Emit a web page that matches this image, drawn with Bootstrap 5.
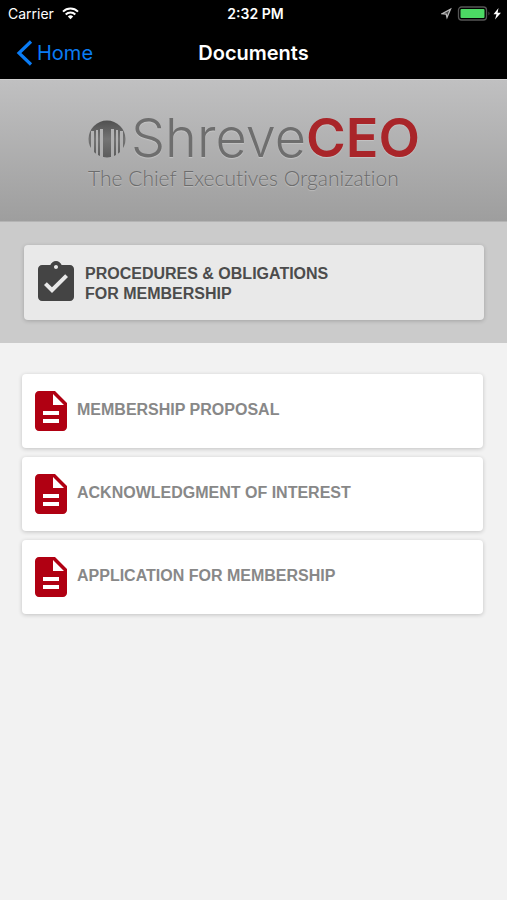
<!DOCTYPE html>
<html lang="en">
<head>
<meta charset="utf-8">
<meta name="viewport" content="width=device-width, initial-scale=1">
<title>Documents</title>
<link href="https://cdn.jsdelivr.net/npm/bootstrap@5.3.0/dist/css/bootstrap.min.css" rel="stylesheet">
<style>
  body { background: #f2f2f2; font-family: Inter, "Liberation Sans", sans-serif; }
  .top-bars { background: #000; color: #fff; }
  .status-bar { height: 27px; font-size: 14px; line-height: 20px; }
  .status-time { font-weight: 600; }
  .title-bar { height: 52px; font-size: 20px; line-height: 24px; }
  .title-bar h1 { font-size: 20px; line-height: 24px; font-weight: 600; }
  .back-link { color: #0a7cf5; gap: 4px; padding-left: 16px; }
  .hero { background: linear-gradient(#c0c0c1, #9e9e9e); height: 143px; border-top: 1px solid #d0d0d0; border-bottom: 1px solid #b4b4b4; padding: 30px 0 0 88px; }
  .brand-row { height: 56px; line-height: 54px; gap: 5px; }
  .brand-mark { margin-top: 2px; }
  .brand-name { color: #6e6e6e; font-size: 54px; font-weight: 300; text-shadow: 0 1px 1px #c4c4c4; }
  .brand-name strong { color: #a92529; font-weight: 600; }
  .tagline { color: #6c6c6c; font-family: Lato, sans-serif; font-weight: 300; font-size: 21px; line-height: 24px; font-variant-ligatures: none; text-shadow: 0 1px 1px #c0c0c0; }
  .band { background: #cbcbcb; padding: 23px 23px 23px 24px; }
  .doc-list { padding: 31px 24px 31px 22px; gap: 9px; }
  .tile { min-height: 74px; border-radius: 4px; font-family: "Liberation Sans", sans-serif; font-size: 16px; line-height: 20px; font-weight: 700; background: #fff; color: #888; box-shadow: 0 1px 4px rgba(0,0,0,.2); padding-left: 5px; gap: 2px; }
  .tile-main { min-height: 75px; background: #e9e9e9; color: #4c4c4c; padding-left: 8px; gap: 5px; }
  .tile-main span { padding-top: 2px; }
  .doc-list span { padding-bottom: 2px; }
  .tile-icon { fill: #b00012; }
  .tile-main .tile-icon { fill: #444; }
</style>
<script src="https://cdn.jsdelivr.net/npm/bootstrap@5.3.0/dist/js/bootstrap.bundle.min.js"></script>
</head>
<body>
<header class="top-bars">
  <div class="status-bar row g-0 align-items-center ps-2 pe-1">
    <div class="col d-flex align-items-center gap-2">
      <span>Carrier</span>
      <svg width="17" height="13" viewBox="0 0 17 13" fill="none" stroke="#fff" stroke-width="2" aria-hidden="true">
        <path d="M1 4.6A10.600 10.600 0 0 1 16 4.600M3.700 7.500A6.800 6.800 0 0 1 13.300 7.500"/>
        <path d="M5.800 9.500A3.800 3.800 0 0 1 11.200 9.500L8.500 12.300z" fill="#fff" stroke="none"/>
      </svg>
    </div>
    <div class="col-auto status-time">2:32 PM</div>
    <div class="col d-flex align-items-center justify-content-end">
      <svg width="62" height="16" viewBox="0 0 62 16" aria-hidden="true">
        <path d="M1 7.800 9.500 3.200 6 11.500 5.200 8.200z" fill="#444" stroke="#bbb" stroke-width="1.300"/>
        <rect x="17.500" y="1" width="28" height="13" rx="3" fill="none" stroke="#555" stroke-width="1.300"/>
        <rect x="19.500" y="3" width="24" height="9" rx="1" fill="#4cd964"/>
        <path d="M47.500 5.500q2 2 0 4z" fill="#555"/>
        <path d="M57.500 2 52.500 8.300h3L54 13.500 60 6.700h-3.400z" fill="#fff"/>
      </svg>
    </div>
  </div>
  <nav class="title-bar row g-0 align-items-center" aria-label="Page">
    <div class="col d-flex">
      <a class="back-link d-flex align-items-center text-decoration-none" href="#">
        <svg width="17" height="26" viewBox="0 0 17 26" fill="none" stroke="currentColor" stroke-width="3.200" aria-hidden="true"><path d="M15 1.500 3 13 15 24.500"/></svg>
        <span>Home</span>
      </a>
    </div>
    <h1 class="col-auto mb-0">Documents</h1>
    <div class="col"></div>
  </nav>
</header>
<main>
  <section class="hero">
    <div class="brand-row d-flex align-items-center text-nowrap">
      <svg class="brand-mark flex-shrink-0" width="38" height="38" viewBox="0 0 38 38" aria-hidden="true">
        <defs>
          <linearGradient id="metal" x1="0" x2="0" y1="0" y2="1"><stop offset="0" stop-color="#505050"/><stop offset=".5" stop-color="#747474"/><stop offset="1" stop-color="#5c5c5c"/></linearGradient>
          <mask id="columns"><rect width="38" height="38" fill="#fff"/><path fill="none" stroke="#000" stroke-width="3" d="M4.500 11v27M13.500 9v29M24.500 9v29M33.500 11v27"/><path fill="none" stroke="#000" stroke-width="2" d="M9 10v28M29 10v28"/></mask>
        </defs>
        <circle cx="19" cy="19" r="18.500" fill="url(#metal)" mask="url(#columns)"/>
      </svg>
      <span class="brand-name">Shreve<strong>CEO</strong></span>
    </div>
    <div class="tagline">The Chief Executives Organization</div>
  </section>
  <section class="band">
    <a class="tile tile-main d-flex align-items-center text-decoration-none" href="#">
      <svg class="tile-icon flex-shrink-0" width="48" height="48" viewBox="0 0 24 24" aria-hidden="true"><path d="M19 3h-4.180C14.400 1.840 13.300 1 12 1c-1.300 0-2.400.84-2.820 2H5c-1.100 0-2 .9-2 2v14c0 1.100.9 2 2 2h14c1.100 0 2-.9 2-2V5c0-1.100-.9-2-2-2zm-7 0c.55 0 1 .45 1 1s-.45 1-1 1-1-.45-1-1 .45-1 1-1zm-2 14l-4-4 1.410-1.410L10 14.170l6.590-6.590L18 9l-8 8z"/></svg>
      <span>PROCEDURES &amp; OBLIGATIONS<br>FOR MEMBERSHIP</span>
    </a>
  </section>
  <section class="doc-list d-flex flex-column">
    <a class="tile d-flex align-items-center text-decoration-none" href="#">
      <svg class="tile-icon flex-shrink-0" width="48" height="48" viewBox="0 0 24 24" aria-hidden="true"><path id="doc" d="M14 2H6c-1.100 0-1.990.9-1.990 2L4 20c0 1.100.89 2 1.990 2H18c1.100 0 2-.9 2-2V8l-6-6zm2 16H8v-2h8v2zm0-4H8v-2h8v2zm-3-5V3.500L18.500 9H13z"/></svg>
      <span>MEMBERSHIP PROPOSAL</span>
    </a>
    <a class="tile d-flex align-items-center text-decoration-none" href="#">
      <svg class="tile-icon flex-shrink-0" width="48" height="48" viewBox="0 0 24 24" aria-hidden="true"><use href="#doc"/></svg>
      <span>ACKNOWLEDGMENT OF INTEREST</span>
    </a>
    <a class="tile d-flex align-items-center text-decoration-none" href="#">
      <svg class="tile-icon flex-shrink-0" width="48" height="48" viewBox="0 0 24 24" aria-hidden="true"><use href="#doc"/></svg>
      <span>APPLICATION FOR MEMBERSHIP</span>
    </a>
  </section>
</main>
</body>
</html>
